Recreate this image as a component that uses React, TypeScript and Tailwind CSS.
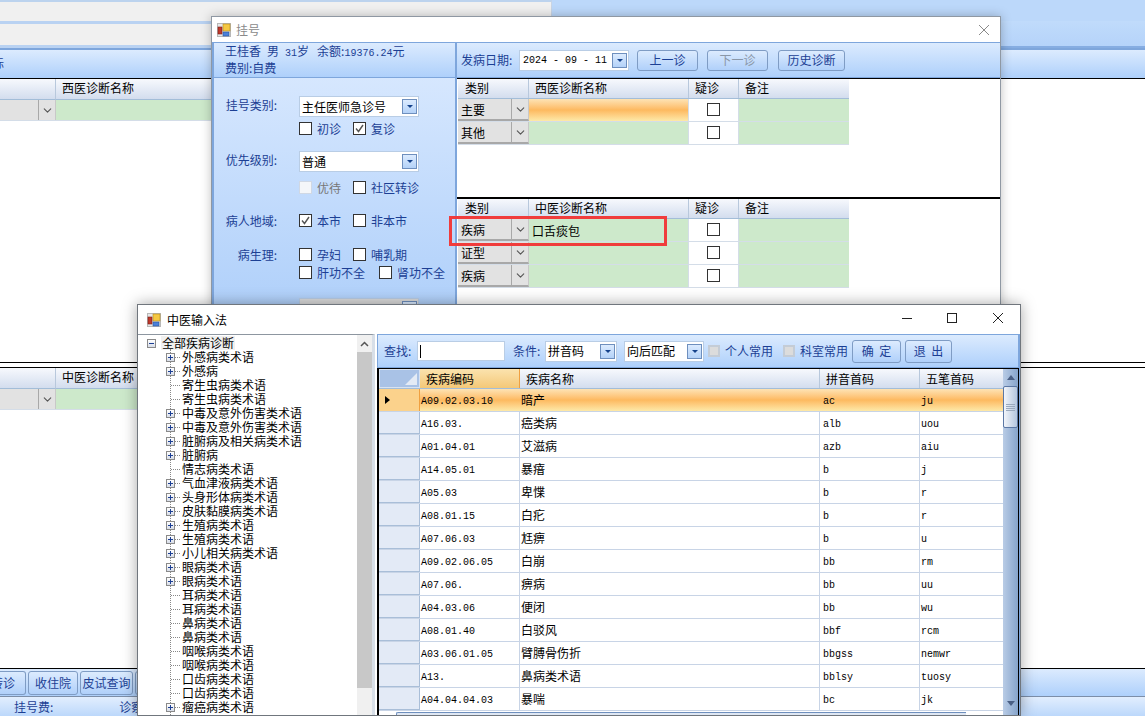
import React from 'react';
import { FiChevronDown } from 'react-icons/fi';

const CJK = "font-['Noto_Sans_CJK_SC','Noto_Sans',sans-serif]";
const MONO = "font-['Liberation_Mono',monospace] text-[10px]";
const navy = 'text-[#1c3f94]';
const barBg = 'bg-gradient-to-b from-[#dcebfe] to-[#aed0fb]';
const headBg = 'bg-gradient-to-b from-[#f7f9fd] to-[#d3ddee]';
const orangeBg = 'bg-gradient-to-b from-[#fde3b4] via-[#fdb95f] to-[#fde9a8]';

const ComboArrow = () => (
  <span className="flex items-center justify-center w-[15px] h-[15px] bg-gradient-to-b from-[#dcebfe] to-[#b4d2f8] border border-[#6e8fbe]">
    <span className="w-0 h-0 border-x-[3px] border-x-transparent border-t-[3px] border-t-[#15428b]" />
  </span>
);

const Combo = ({ text, w, disabled }: { text?: string; w: string; disabled?: boolean }) => (
  <div className={`${w} h-[21px] flex items-center justify-between pl-[2px] pr-[1px] border border-[#b9cde5] ${disabled ? 'bg-[#dcdcdc]' : 'bg-white'} text-[12px] text-black`}>
    <span>{text}</span>
    <ComboArrow />
  </div>
);

const Check = ({ label, checked, disabled, w }: { label: string; checked?: boolean; disabled?: boolean; w?: string }) => (
  <div className={`flex items-center gap-[5px] ${w ?? ''}`}>
    <span className={`w-[13px] h-[13px] border flex items-center justify-center ${disabled ? 'border-[#d0d8e4] bg-[#f4f6f9]' : 'border-[#333] bg-white'}`}>
      {checked && (
        <svg width="11" height="11" viewBox="0 0 11 11">
          <path d="M2 5.5 L4.5 8.5 L9 2" fill="none" stroke="#555" strokeWidth="1.4" />
        </svg>
      )}
    </span>
    <span className={`text-[12px] ${disabled ? 'text-[#777]' : 'text-[#1c3f94]'}`}>{label}</span>
  </div>
);

const Btn = ({ text, w, disabled, h }: { text: string; w: string; disabled?: boolean; h?: string }) => (
  <div className={`${w} ${h ?? 'h-[21px]'} flex items-center justify-center rounded-[3px] border border-[#7f9cc4] bg-gradient-to-b from-[#dcebfe] to-[#b0d0fa] text-[12px] whitespace-pre ${disabled ? 'text-[#8a97a8]' : navy}`}>
    {text}
  </div>
);

const Label = ({ text, raised }: { text: string; raised?: boolean }) => (
  <span className={`w-[63px] text-right text-[12px] whitespace-nowrap ${raised ? 'pb-[3px]' : ''} ${navy}`}>{text}</span>
);

// 诊断表格 (upper and lower grid in the 挂号 window)
const DiagGrid = ({ title, kinds, active }: { title: string; kinds: string[]; active?: boolean }) => (
  <div className="w-[391px] text-[12px] text-black">
    <div className={`flex h-[20px] ${headBg} border-b border-[#a3bdd8]`}>
      <div className="w-[71px] pl-[7px] border-r border-[#b8c8dc]">类别</div>
      <div className="w-[160px] pl-[6px] border-r border-[#b8c8dc]">{title}</div>
      <div className="w-[50px] pl-[6px] border-r border-[#b8c8dc]">疑诊</div>
      <div className="flex-1 pl-[6px]">备注</div>
    </div>
    {kinds.map((k, i) => (
      <div key={i} className="flex h-[23px] border-b border-[#d4dde8]">
        <div className="w-[71px] flex bg-[#e2e2e2] border-r border-[#c8c8c8] border-b-[2px] border-b-[#a8a8a8]">
          <span className="flex-1 pl-[3px] leading-[22px]">{k}</span>
          <span className="w-[17px] flex items-center justify-center border-l border-[#a8a8a8]">
            <FiChevronDown size={13} color="#555" />
          </span>
        </div>
        <div className={`w-[160px] border-r border-[#d4dde8] ${active && i === 0 ? orangeBg : 'bg-[#cde9cb]'}`} />
        <div className="w-[50px] flex items-center justify-center pb-[2px] bg-white border-r border-[#d4dde8]">
          <span className="w-[13px] h-[13px] border border-[#333]" />
        </div>
        <div className="flex-1 bg-[#cde9cb]" />
      </div>
    ))}
  </div>
);

const treeItems: [string, boolean][] = [
  ['外感病类术语', true], ['外感病', true], ['寄生虫病类术语', false], ['寄生虫病类术语', false],
  ['中毒及意外伤害类术语', true], ['中毒及意外伤害类术语', true], ['脏腑病及相关病类术语', true], ['脏腑病', true],
  ['情志病类术语', false], ['气血津液病类术语', true], ['头身形体病类术语', true], ['皮肤黏膜病类术语', true],
  ['生殖病类术语', true], ['生殖病类术语', true], ['小儿相关病类术语', true], ['眼病类术语', true],
  ['眼病类术语', true], ['耳病类术语', false], ['耳病类术语', false], ['鼻病类术语', false],
  ['鼻病类术语', false], ['咽喉病类术语', false], ['咽喉病类术语', false], ['口齿病类术语', false],
  ['口齿病类术语', false], ['瘤癌病类术语', true], ['瘤癌病类术语', true],
];

const rows = [
  ['A09.02.03.10', '暗产', 'ac', 'ju'],
  ['A16.03.', '癌类病', 'alb', 'uou'],
  ['A01.04.01', '艾滋病', 'azb', 'aiu'],
  ['A14.05.01', '暴瘖', 'b', 'j'],
  ['A05.03', '卑惵', 'b', 'r'],
  ['A08.01.15', '白疕', 'b', 'r'],
  ['A07.06.03', '尪痹', 'b', 'u'],
  ['A09.02.06.05', '白崩', 'bb', 'rm'],
  ['A07.06.', '痹病', 'bb', 'uu'],
  ['A04.03.06', '便闭', 'bb', 'wu'],
  ['A08.01.40', '白驳风', 'bbf', 'rcm'],
  ['A03.06.01.05', '臂膊骨伤折', 'bbgss', 'nemwr'],
  ['A13.', '鼻病类术语', 'bblsy', 'tuosy'],
  ['A04.04.04.03', '暴喘', 'bc', 'jk'],
];

const TreeBox = ({ minus }: { minus?: boolean }) => (
  <span className="relative w-[9px] h-[9px] border border-[#8a8a8a] bg-gradient-to-b from-white to-[#d8dde8] flex items-center justify-center shrink-0">
    <span className="w-[5px] h-px bg-[#1c3f94]" />
    {!minus && <span className="absolute w-px h-[5px] bg-[#1c3f94]" />}
  </span>
);

const WinIcon = () => (
  <svg width="14" height="14" viewBox="0 0 14 14" className="shrink-0">
    <rect x="0.5" y="0.5" width="13" height="13" fill="#e8e8e8" stroke="#b8b8b8" />
    <rect x="6" y="1" width="7" height="7" fill="#f5c842" stroke="#b58a1a" strokeWidth="0.6" />
    <rect x="1" y="4" width="4" height="7" fill="#c0392b" stroke="#7c1d14" strokeWidth="0.6" />
    <rect x="6" y="9" width="6" height="4" fill="#4a80d8" stroke="#2a5299" strokeWidth="0.6" />
  </svg>
);

const Background = () => (
  <div className="flex flex-col h-[716px] text-[12px] text-black">
    <div className="flex h-[21px]">
      <div className="w-[552px] bg-[#f0f0f0] border-t-2 border-[#bcd3ee] border-r border-r-[#c8d4e4]" />
      <div className="flex-1 bg-[#bcd8fa]" />
    </div>
    <div className="flex h-[27px]">
      <div className="w-[211px] border-y-[3px] border-y-[#b9d2f2] bg-[#f0f0f0]" />
      <div className="flex-1 bg-gradient-to-b from-[#c0dbfb] to-[#b5d3fa] border-b-2 border-b-[#86ade2]" />
    </div>
    <div className={`h-[31px] ${barBg} border-t-2 border-[#7ea6dc] border-b-[1px] border-b-black`}>
      <span className={`text-[12px] ${navy} ml-[-8px] leading-[26px]`}>标</span>
    </div>
    <div className="flex h-[21px] w-[211px]">
      <div className={`w-[56px] ${headBg} border-r border-[#b8c8dc] border-b border-b-[#a3bdd8]`} />
      <div className={`flex-1 pl-[6px] ${headBg} border-b border-b-[#a3bdd8]`}>西医诊断名称</div>
    </div>
    <div className="flex h-[21px] w-[211px] border-b border-[#d4dde8]">
      <div className="w-[56px] flex justify-end bg-[#e2e2e2] border-r border-[#c8c8c8]">
        <span className="w-[17px] flex items-center justify-center border-l border-[#a8a8a8]"><FiChevronDown size={13} color="#555" /></span>
      </div>
      <div className="flex-1 bg-[#cde9cb]" />
    </div>
    <div className="flex-1 bg-white" />
    <div className="border-y border-black h-[6px]" />
    <div className="flex h-[21px] w-[137px]">
      <div className={`w-[56px] ${headBg} border-r border-[#b8c8dc] border-b border-b-[#a3bdd8]`} />
      <div className={`flex-1 pl-[6px] ${headBg} border-b border-b-[#a3bdd8] whitespace-nowrap overflow-hidden`}>中医诊断名称</div>
    </div>
    <div className="flex h-[21px] w-[137px] border-b border-[#d4dde8]">
      <div className="w-[56px] flex justify-end bg-[#e2e2e2] border-r border-[#c8c8c8]">
        <span className="w-[17px] flex items-center justify-center border-l border-[#a8a8a8]"><FiChevronDown size={13} color="#555" /></span>
      </div>
      <div className="flex-1 bg-[#cde9cb]" />
    </div>
    <div className="h-[258px] bg-white" />
    <div className={`h-[29px] ${barBg} border-t-[1px] border-t-black border-b border-b-[#7c8ea8] flex items-center gap-[2px]`}>
      <div className={`w-[26px] h-[24px] rounded-r-[3px] border border-l-0 border-[#7f9cc4] bg-gradient-to-b from-[#dcebfe] to-[#b0d0fa] overflow-hidden flex justify-end items-center pr-[10px] text-[12px] whitespace-nowrap ${navy}`}>转诊</div>
      <Btn text="收住院" w="w-[50px]" h="h-[24px]" />
      <Btn text="皮试查询" w="w-[53px]" h="h-[24px]" />
      <Btn text="" w="w-[20px]" h="h-[24px]" />
    </div>
    <div className={`h-[19px] shrink-0 bg-gradient-to-b from-[#e2eefe] to-[#bcd8fb] flex items-center pl-[14px] gap-[66px] ${navy}`}>
      <span>挂号费:</span>
      <span>诊察费:</span>
    </div>
  </div>
);

const RegisterWindow = () => (
  <div className="absolute left-[211px] top-[16px] w-[790px] h-[300px] flex flex-col bg-white border border-[#8f98a3] shadow-[0_0_10px_rgba(0,0,0,0.25)]">
    <div className="h-[25px] shrink-0 flex items-center pl-[5px] gap-[5px] relative bg-white">
      <WinIcon />
      <span className="text-[12px] text-[#8a8a8a]">挂号</span>
      <svg width="12" height="12" viewBox="0 0 12 12" className="absolute right-[10px] top-[7px]">
        <path d="M1 1 L11 11 M11 1 L1 11" stroke="#8a8a8a" strokeWidth="1" />
      </svg>
    </div>
    <div className="flex flex-1 min-h-0 border-t border-[#7ea6dc]">
      <div className="w-[245px] shrink-0 flex flex-col border-x-2 border-[#7ea6dc]">
        <div className={`h-[35px] shrink-0 ${barBg} border-b border-[#7ea6dc] pl-[11px] text-[12px] leading-[14px] ${navy} pt-[1px]`}>
          <div className="flex items-baseline whitespace-nowrap">
            <span>王桂香</span>
            <span className="ml-[6px]">男</span>
            <span className={`ml-[6px] ${MONO}`}>31</span>
            <span>岁</span>
            <span className="ml-[8px]">余额:</span>
            <span className={MONO}>19376.24</span>
            <span>元</span>
          </div>
          <div>费别:自费</div>
        </div>
        <div className="flex-1 bg-gradient-to-b from-[#d6e7fe] to-[#aecffa]">
          <div className="flex items-center h-[21px] mt-[18px]">
            <Label text="挂号类别:" raised /><div className="ml-[22px]"><Combo text="主任医师急诊号" w="w-[120px]" /></div>
          </div>
          <div className="flex items-center h-[15px] mt-[4px] ml-[85px]">
            <Check label="初诊" w="w-[54px]" /><Check label="复诊" checked />
          </div>
          <div className="flex items-center h-[21px] mt-[15px]">
            <Label text="优先级别:" raised /><div className="ml-[22px]"><Combo text="普通" w="w-[120px]" /></div>
          </div>
          <div className="flex items-center h-[15px] mt-[8px] ml-[85px]">
            <Check label="优待" disabled w="w-[54px]" /><Check label="社区转诊" />
          </div>
          <div className="flex items-center h-[15px] mt-[18px]">
            <Label text="病人地域:" /><div className="ml-[22px] flex"><Check label="本市" checked w="w-[54px]" /><Check label="非本市" /></div>
          </div>
          <div className="flex items-center h-[15px] mt-[19px]">
            <Label text="病生理:" /><div className="ml-[22px] flex"><Check label="孕妇" w="w-[54px]" /><Check label="哺乳期" /></div>
          </div>
          <div className="flex items-center h-[15px] mt-[3px] ml-[85px]">
            <Check label="肝功不全" w="w-[80px]" /><Check label="肾功不全" />
          </div>
          <div className="mt-[18px] ml-[85px]"><Combo w="w-[120px]" disabled /></div>
        </div>
      </div>
      <div className="flex-1 min-w-0 flex flex-col">
        <div className={`h-[35px] shrink-0 ${barBg} flex items-center pl-[4px] border-b border-[#7ea6dc]`}>
          <span className={`text-[12px] ${navy} w-[58px]`}>发病日期:</span>
          <div className={`w-[110px] h-[21px] bg-white border border-[#b9cde5] flex items-center justify-between pl-[3px] pr-[1px] text-black whitespace-pre ${MONO}`}>
            <span>2024 - 09 - 11</span>
            <ComboArrow />
          </div>
          <div className="ml-[8px]"><Btn text="上一诊" w="w-[61px]" /></div>
          <div className="ml-[9px]"><Btn text="下一诊" w="w-[61px]" disabled /></div>
          <div className="ml-[10px]"><Btn text="历史诊断" w="w-[67px]" /></div>
        </div>
        <div className="h-[119px] shrink-0 bg-white border-t border-black pl-[1px]">
          <DiagGrid title="西医诊断名称" kinds={['主要', '其他']} active />
        </div>
        <div className="flex-1 bg-white border-t-2 border-black pl-[1px]">
          <DiagGrid title="中医诊断名称" kinds={['疾病', '证型', '疾病']} />
        </div>
      </div>
    </div>
  </div>
);

const InputWindow = () => (
  <div className="absolute left-[137px] top-[304px] w-[884px] h-[412px] flex flex-col bg-white border border-[#70767d] shadow-[0_0_14px_rgba(0,0,0,0.35)]">
    <div className="h-[29px] shrink-0 flex items-center pl-[9px] gap-[6px] relative">
      <WinIcon />
      <span className="text-[12px] text-black">中医输入法</span>
      <svg width="110" height="12" viewBox="0 0 110 12" className="absolute right-[17px] top-[7px]">
        <path d="M9 6.5 H19" stroke="#222" strokeWidth="1" />
        <rect x="54.5" y="1.5" width="9" height="9" fill="none" stroke="#222" />
        <path d="M100 1 L110 11 M110 1 L100 11" stroke="#222" strokeWidth="1" />
      </svg>
    </div>
    <div className="flex flex-1 min-h-0">
      {/* tree */}
      <div className="w-[237px] shrink-0 flex border-t border-[#8d96a0] border-r-[3px] border-r-[#d8dfe8]">
        <div className="flex-1 min-w-0 relative overflow-hidden pl-[9px] pt-[1px] text-[12px] leading-[14px] text-black">
          <span className="absolute left-[32px] top-[14px] bottom-0 border-l border-dotted border-[#888]" />
          <div className="h-[14px] flex items-center gap-[5px]">
            <TreeBox minus />
            <span className="bg-[#f0f0f0] px-[1px]">全部疾病诊断</span>
          </div>
          {treeItems.map(([t, hasKids], i) => (
            <div key={i} className="h-[14px] flex items-center ml-[19px] relative whitespace-nowrap">
              {hasKids ? <TreeBox /> : <span className="w-[9px] shrink-0" />}
              {hasKids
                ? <span className="w-[5px] border-t border-dotted border-[#888]" />
                : <span className="absolute left-[5px] w-[9px] border-t border-dotted border-[#888]" />}
              <span className={hasKids ? 'ml-[2px]' : 'ml-[7px]'}>{t}</span>
            </div>
          ))}
        </div>
        <div className="w-[15px] shrink-0 flex flex-col bg-[#f0f0f0]">
          <div className="h-[17px] flex items-center justify-center">
            <svg width="9" height="6" viewBox="0 0 9 6"><path d="M1 5 L4.5 1.5 L8 5" fill="none" stroke="#555" strokeWidth="1.5" /></svg>
          </div>
          <div className="h-[336px] bg-[#c8c8c8]" />
        </div>
      </div>
      {/* right side */}
      <div className="flex-1 min-w-0 flex flex-col ml-[2px] border-r border-[#7ea6dc]">
        <div className={`h-[34px] shrink-0 ${barBg} border border-[#7ea6dc] flex items-center pl-[6px] text-[12px] ${navy} whitespace-nowrap`}>
          <span className="w-[33px]">查找:</span>
          <div className="w-[88px] h-[20px] bg-white border border-[#b9cde5] flex items-center pl-[2px]"><span className="w-px h-[13px] bg-black" /></div>
          <span className="ml-[8px] w-[32px]">条件:</span>
          <Combo text="拼音码" w="w-[72px]" />
          <div className="ml-[7px]"><Combo text="向后匹配" w="w-[80px]" /></div>
          <span className="ml-[4px] w-[12px] h-[12px] border-2 border-[#c4ccd6] bg-[#dcdcdc]" />
          <span className="ml-[5px]">个人常用</span>
          <span className="ml-[10px] w-[12px] h-[12px] border-2 border-[#c4ccd6] bg-[#dcdcdc]" />
          <span className="ml-[5px]">科室常用</span>
          <div className="ml-[4px]"><Btn text="确  定" w="w-[49px]" h="h-[23px]" /></div>
          <div className="ml-[4px]"><Btn text="退  出" w="w-[47px]" h="h-[23px]" /></div>
        </div>
        <div className="flex-1 min-h-0 flex border-l-2 border-t border-black overflow-hidden relative">
          <div className="flex-1 min-w-0 flex flex-col text-black">
            <div className="flex h-[20px] shrink-0 text-[12px] leading-[20px] border-b border-[#a3bdd8]">
              <div className="w-[41px] bg-[#a9c2e6] border border-[#d8e2f0] relative">
                <span className="absolute right-[2px] bottom-[2px] w-0 h-0 border-l-[12px] border-l-transparent border-b-[12px] border-b-[#e4ebf5]" />
              </div>
              <div className="w-[100px] pl-[6px] bg-gradient-to-b from-[#fbe3ae] to-[#f4c877] border-r border-[#f0a040]">疾病编码</div>
              <div className={`w-[300px] pl-[6px] ${headBg} border-r border-[#b8c8dc]`}>疾病名称</div>
              <div className={`w-[100px] pl-[6px] ${headBg} border-r border-[#b8c8dc]`}>拼音首码</div>
              <div className={`flex-1 pl-[6px] ${headBg}`}>五笔首码</div>
            </div>
            {rows.map((r, i) => (
              <div key={i} className={`flex h-[23px] shrink-0 leading-[22px] border-b border-[#c8d4e6] ${i === 0 ? orangeBg : 'bg-white'}`}>
                <div className={`w-[41px] flex items-center pl-[6px] border-r ${i === 0 ? 'bg-[#fbd28c] border-[#f0a040]' : 'bg-[#e3eaf6] border-[#a9bed8] border-b border-b-[#a9bed8]'}`}>
                  {i === 0 && <span className="w-0 h-0 border-y-[4px] border-y-transparent border-l-[5px] border-l-black" />}
                </div>
                <div className={`w-[100px] pl-[1px] pt-[2px] ${MONO} border-r ${i === 0 ? 'border-transparent' : 'border-[#c8d4e6]'}`}>{r[0]}</div>
                <div className={`w-[300px] pl-[1px] text-[12px] border-r ${i === 0 ? 'border-transparent' : 'border-[#c8d4e6]'}`}>{r[1]}</div>
                <div className={`w-[100px] pl-[3px] pt-[2px] ${MONO} border-r ${i === 0 ? 'border-transparent' : 'border-[#c8d4e6]'}`}>{r[2]}</div>
                <div className={`flex-1 pl-[1px] pt-[2px] ${MONO}`}>{r[3]}</div>
              </div>
            ))}
          </div>
          <div className="w-[16px] shrink-0 flex flex-col bg-gradient-to-r from-[#b9cce6] to-[#86a4cb] border-r border-black">
            <div className="h-[17px] flex items-center justify-center">
              <span className="w-0 h-0 border-x-[4px] border-x-transparent border-b-[5px] border-b-[#4a5f84]" />
            </div>
            <div className="h-[42px] rounded-[2px] border border-[#5c78a5] bg-gradient-to-r from-[#f2f5fa] to-[#b4c6de] flex flex-col items-center justify-center gap-px">
              <span className="w-[9px] h-px bg-[#9aa9bd]" />
              <span className="w-[9px] h-px bg-[#9aa9bd]" />
              <span className="w-[9px] h-px bg-[#9aa9bd]" />
              <span className="w-[9px] h-px bg-[#9aa9bd]" />
            </div>
            <div className="flex-1" />
            <div className="h-[20px] flex items-start justify-center pt-[6px]">
              <span className="w-0 h-0 border-x-[4px] border-x-transparent border-t-[5px] border-t-[#4a5f84]" />
            </div>
          </div>
          <div className="absolute left-[17px] bottom-0 w-[570px] h-[3px] bg-[#dfe7f3] border-t border-l border-[#6e8fbe] rounded-tl-[2px]" />
        </div>
      </div>
    </div>
  </div>
);

export default function App() {
  return (
    <div className={`relative w-[1145px] h-[716px] overflow-hidden bg-white ${CJK}`}>
      <Background />
      <RegisterWindow />
      <InputWindow />
      {/* 红框标注 */}
      <div className="absolute left-[449px] top-[216px] w-[218px] h-[30px] border-[3px] border-[#f03c3c] flex items-center">
        <span className="ml-[80px] text-[12px] text-black">口舌痰包</span>
      </div>
    </div>
  );
}
